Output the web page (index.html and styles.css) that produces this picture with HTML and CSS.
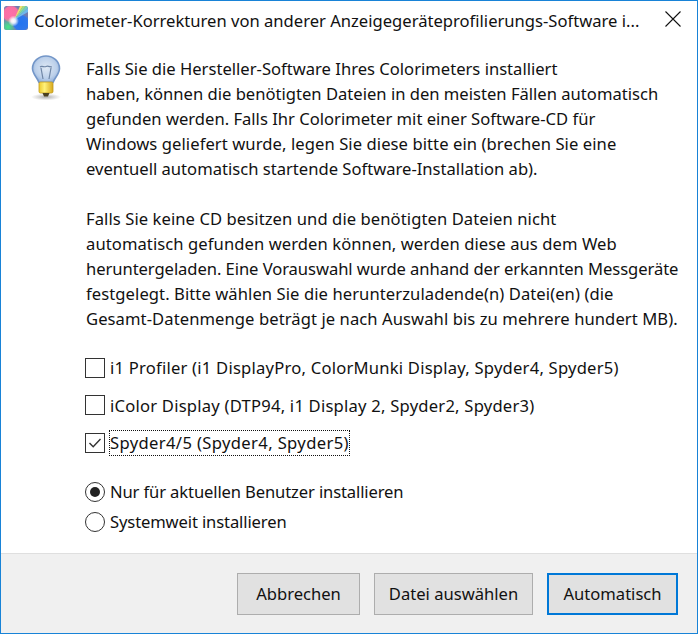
FILE: index.html
```html
<!DOCTYPE html>
<html lang="de">
<head>
<meta charset="utf-8">
<title>Colorimeter-Korrekturen</title>
<link rel="stylesheet" href="styles.css">
</head>
<body>
<div class="window">
  <header class="titlebar">
    <svg class="app-icon" width="24" height="24" viewBox="0 0 24 24" aria-hidden="true">
      <defs>
        <radialGradient id="pink" cx="0.5" cy="0.5" r="0.5"><stop offset="0" stop-color="#ff6fa8"/><stop offset="0.8" stop-color="#f870a4"/><stop offset="1" stop-color="#f878a8" stop-opacity="0"/></radialGradient>
        <radialGradient id="blue" cx="0.5" cy="0.5" r="0.5"><stop offset="0" stop-color="#2474f0"/><stop offset="0.8" stop-color="#3078ec"/><stop offset="1" stop-color="#3a80ec" stop-opacity="0"/></radialGradient>
        <radialGradient id="green" cx="0.5" cy="0.5" r="0.5"><stop offset="0" stop-color="#40ea84"/><stop offset="1" stop-color="#58e890" stop-opacity="0"/></radialGradient>
        <radialGradient id="white" cx="0.5" cy="0.5" r="0.5"><stop offset="0" stop-color="#fff"/><stop offset="0.4" stop-color="#fff" stop-opacity=".85"/><stop offset="1" stop-color="#fff" stop-opacity="0"/></radialGradient>
        <clipPath id="corner"><rect width="24" height="24" rx="2.5"/></clipPath>
      </defs>
      <g clip-path="url(#corner)">
        <rect width="24" height="24" fill="#6f7cb0"/>
        <circle cx="7" cy="8" r="9" fill="url(#pink)"/>
        <circle cx="4" cy="21" r="9" fill="url(#green)"/>
        <circle cx="17" cy="17" r="9" fill="url(#blue)"/>
        <path d="M10 14L16 0H19Z" fill="#f0e070"/>
        <path d="M10 14L19 0H22Z" fill="#a0e080"/>
        <path d="M10 14L22 0H24V2Z" fill="#70d0c0"/>
        <path d="M10 14L24 2V6Z" fill="#70b8ec"/>
        <circle cx="9.5" cy="15" r="5.5" fill="url(#white)"/>
      </g>
    </svg>
    <span class="title">Colorimeter-Korrekturen von anderer Anzeigegeräteprofilierungs-Software i...</span>
    <svg class="close" width="16" height="16" viewBox="0 0 16 16" aria-hidden="true"><path d="M0.5 0.5L15.5 15.5M15.5 0.5L0.5 15.5" stroke="#111" stroke-width="1.1" fill="none"/></svg>
  </header>
  <main class="content">
    <svg class="bulb" width="32" height="48" viewBox="0 0 32 48" aria-hidden="true">
      <defs>
        <radialGradient id="glass" cx="0.5" cy="0.45" r="0.6"><stop offset="0" stop-color="#dfe9f5"/><stop offset="0.65" stop-color="#bcd0ea"/><stop offset="1" stop-color="#8aabd8"/></radialGradient>
        <linearGradient id="brass" x1="0" y1="0" x2="1" y2="0"><stop offset="0" stop-color="#ecc92e"/><stop offset="0.4" stop-color="#fff27a"/><stop offset="1" stop-color="#d8a81c"/></linearGradient>
        <radialGradient id="shadow" cx="0.5" cy="0.5" r="0.5"><stop offset="0" stop-color="#777" stop-opacity=".6"/><stop offset="1" stop-color="#888" stop-opacity="0"/></radialGradient>
      </defs>
      <ellipse cx="16" cy="42" rx="15" ry="3.5" fill="url(#shadow)"/>
      <path d="M16 1C8.5 1 2.5 6.5 2.5 13.5C2.5 19 7 22 9 27.5H23C25 22 29.5 19 29.5 13.5C29.5 6.5 23.5 1 16 1Z" fill="url(#glass)" stroke="#7396c8" stroke-width="1.6"/>
      <path d="M10 12C12 10.5 14 12.5 16 11.5C18 10.5 20 12 22 12M11 13L13 24M21 13L19 24" stroke="#6f86a6" stroke-width="1.2" fill="none"/>
      <rect x="9" y="27" width="14" height="11" rx="1.5" fill="url(#brass)" stroke="#c09a20" stroke-width=".8"/>
      <path d="M12.5 38H19.5L18 41.5H14Z" fill="#4a4020"/>
    </svg>
    <div class="body">
      <p class="para">Falls Sie die Hersteller-Software Ihres Colorimeters installiert<br>haben, können die benötigten Dateien in den meisten Fällen automatisch<br>gefunden werden. Falls Ihr Colorimeter mit einer Software-CD für<br><span class="loose">Windows geliefert wurde, legen Sie diese bitte ein (brechen Sie eine</span><br>eventuell automatisch startende Software-Installation ab).</p>
      <p class="para"><span class="loose">Falls Sie keine CD besitzen und die benötigten Dateien nicht</span><br><span class="loose">automatisch gefunden werden können, werden diese aus dem Web</span><br><span class="tight">heruntergeladen. Eine Vorauswahl wurde anhand der erkannten Messgeräte</span><br><span class="loose">festgelegt. Bitte wählen Sie die herunterzuladende(n) Datei(en) (die</span><br><span class="loose">Gesamt-Datenmenge beträgt je nach Auswahl bis zu mehrere hundert MB).</span></p>
      <div class="checks">
        <div class="opt"><span class="box"></span><span class="label">i1 Profiler (i1 DisplayPro, ColorMunki Display, Spyder4, Spyder5)</span></div>
        <div class="opt"><span class="box"></span><span class="label">iColor Display (DTP94, i1 Display 2, Spyder2, Spyder3)</span></div>
        <div class="opt"><span class="box"><svg width="18" height="18" viewBox="0 0 18 18" aria-hidden="true"><path d="M3.5 9L7.2 12.8L14.5 5" stroke="#333" stroke-width="1.4" fill="none"/></svg></span><span class="label focus">Spyder4/5 (Spyder4, Spyder5)</span></div>
      </div>
      <div class="radios">
        <div class="opt"><span class="radio on"></span><span class="label">Nur für aktuellen Benutzer installieren</span></div>
        <div class="opt"><span class="radio"></span><span class="label">Systemweit installieren</span></div>
      </div>
    </div>
  </main>
  <footer class="footer">
    <button class="btn btn-cancel">Abbrechen</button>
    <button class="btn btn-file">Datei auswählen</button>
    <button class="btn btn-auto">Automatisch</button>
  </footer>
</div>
</body>
</html>
```
FILE: styles.css
```css
* { box-sizing: border-box; }
html, body { margin: 0; padding: 0; }
body {
  width: 698px; height: 634px; background: #fff; overflow: hidden;
  font-family: "Noto Sans", "Open Sans", sans-serif; font-size: 16.6px; color: #111;
}
.window {
  width: 698px; height: 634px;
  border: 1px solid #1883d7;
  display: flex; flex-direction: column;
}
.titlebar {
  display: flex; align-items: center; height: 40px; flex: none;
  padding: 0 16px 1px 3px;
}
.app-icon { flex: none; margin: 0 6px 5px 0; }
.title { flex: 1; white-space: nowrap; }
.close { flex: none; margin-bottom: 3px; }
.content {
  flex: 1; display: flex; padding: 15px 0 0 29px; min-height: 0;
}
.bulb { flex: none; margin-right: 24px; margin-top: -1px; }
.body { flex: 1; min-width: 0; }
.para { margin: 0 0 25px; line-height: 25px; white-space: nowrap; }
.para:last-of-type { margin-bottom: 0; }
.loose { letter-spacing: 0.075px; }
.tight { letter-spacing: -0.07px; }
.checks { margin: 18px 0 0 -1px; display: flex; flex-direction: column; }
.checks .opt { height: 37.5px; }
.checks .label { letter-spacing: 0.22px; }
.checks .label.focus { letter-spacing: 0.36px; outline: 1px dotted #111; line-height: 24px; }
.radios { margin: 15px 0 0 -1px; }
.radios .opt { height: 30px; }
.radios .label { letter-spacing: -0.13px; }
.opt { display: flex; align-items: center; white-space: nowrap; }
.box {
  width: 20px; height: 20px; border: 1px solid #333; background: #fff; flex: none;
  margin-right: 5px; display: flex; align-items: center; justify-content: center;
}
.radio {
  width: 20px; height: 20px; border: 1px solid #333; border-radius: 50%; background: #fff; flex: none;
  margin-right: 5px; display: flex; align-items: center; justify-content: center;
}
.radio.on::after { content: ""; width: 10px; height: 10px; border-radius: 50%; background: #222; }
.footer {
  flex: none; height: 80px; background: #f0f0f0; border-top: 1px solid #dfdfdf;
  display: flex; justify-content: flex-end; gap: 14px; padding: 19px 19px 0 0;
}
.btn {
  height: 42px; background: #e1e1e1; border: 1px solid #adadad; padding: 0 0 2px;
  font: inherit; color: #111;
}
.btn-cancel { width: 123px; }
.btn-file { width: 159px; }
.btn-auto { width: 131px; border: 2px solid #0078d7; }
```
